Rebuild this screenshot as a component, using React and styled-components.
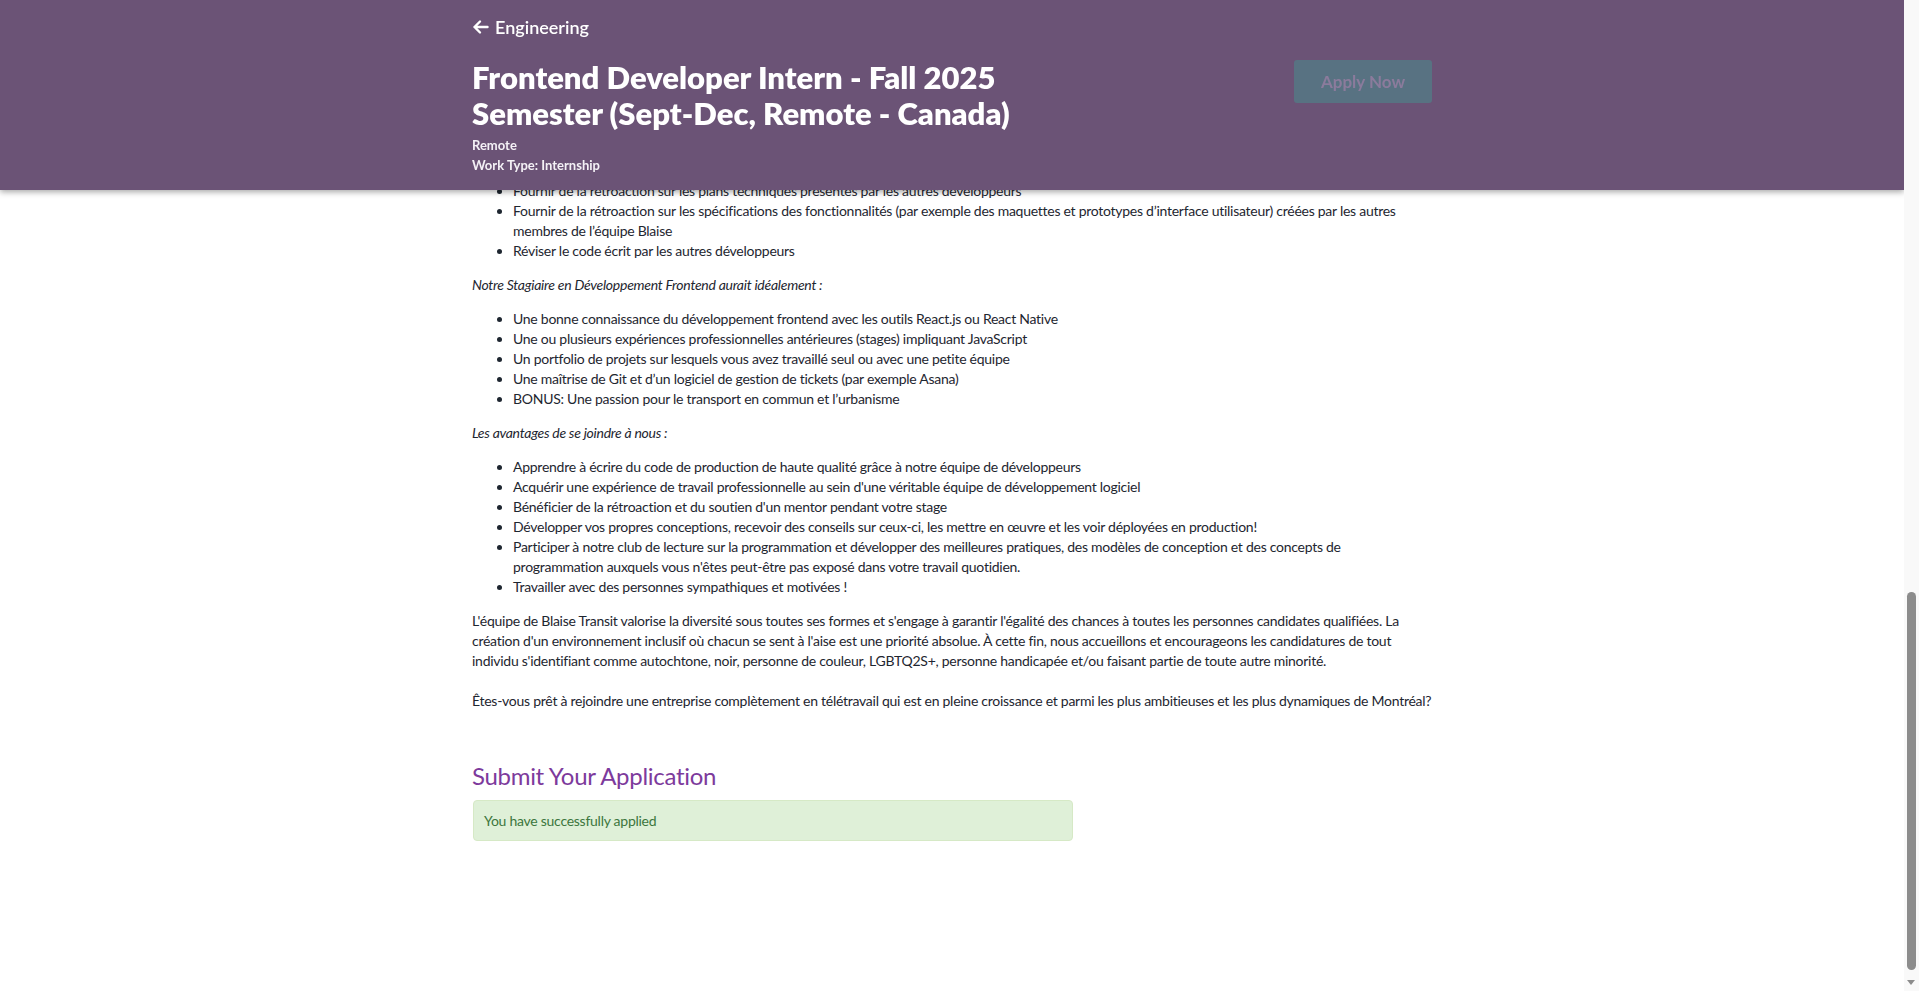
import React from "react";
import styled, { createGlobalStyle } from "styled-components";

const Global = createGlobalStyle`
  body {
    margin: 0;
    padding-right: 15px;
    background: #ffffff;
    font-family: Lato, "Liberation Sans", sans-serif;
    color: #1e2630;
  }
  * { box-sizing: border-box; }
`;

const Header = styled.header`
  position: fixed;
  top: 0;
  left: 0;
  right: 15px;
  height: 190px;
  background: #6b5376;
  color: #ffffff;
  box-shadow: 0 2px 6px rgba(0, 0, 0, 0.35);
  z-index: 10;
`;

const Container = styled.div`
  width: 960px;
  margin: 0 auto;
`;

const HeaderInner = styled(Container)`
  display: flex;
  justify-content: space-between;
  align-items: flex-start;
  padding-top: 15px;
`;

const HeaderMain = styled.div`
  display: flex;
  flex-direction: column;
`;

const BackLink = styled.a`
  display: flex;
  align-items: center;
  gap: 6px;
  font-size: 18px;
  line-height: 24px;
  font-weight: 600;
  color: #ffffff;
  text-decoration: none;
`;

const Title = styled.h1`
  margin: 20px 0 4px;
  max-width: 600px;
  font-size: 31px;
  line-height: 36px;
  font-weight: 800;
  letter-spacing: 0;
`;

const Meta = styled.div`
  font-size: 13px;
  line-height: 20px;
  font-weight: 700;
  color: #f4f1f6;
`;

const ApplyButton = styled.button`
  margin-top: 45px;
  width: 138px;
  height: 43px;
  border: none;
  border-radius: 3px;
  background: #587282;
  color: #8b7b9c;
  font-family: inherit;
  font-size: 17px;
  font-weight: 700;
  cursor: not-allowed;
`;

const Main = styled(Container)`
  padding-top: 181px;
  padding-bottom: 151px;
  font-size: 14px;
  line-height: 20px;
  letter-spacing: -0.265px;
`;

const List = styled.ul`
  margin: 14px 0;
  padding-left: 41px;
  &:first-child { margin-top: 0; }
`;

const Item = styled.li``;

const Lead = styled.p`
  margin: 14px 0;
  font-style: italic;
`;

const Para = styled.p`
  margin: 14px 0 0;
`;

const SectionTitle = styled.h2`
  margin: 52px 0 11px;
  font-size: 24px;
  line-height: 26px;
  font-weight: 400;
  letter-spacing: -0.3px;
  color: #7d3a9c;
`;

const SuccessBox = styled.div`
  width: 600px;
  margin-left: 1px;
  padding: 10px;
  background: #dff0d8;
  border: 1px solid #d6e9c6;
  border-radius: 4px;
  color: #3c763d;
  font-size: 14px;
  line-height: 19px;
`;

const ScrollTrack = styled.div`
  position: fixed;
  top: 0;
  right: 0;
  bottom: 0;
  width: 15px;
  background: #f9f9f9;
  z-index: 20;
`;

const ScrollThumb = styled.div`
  position: absolute;
  top: 592px;
  left: 3px;
  width: 9px;
  height: 378px;
  border-radius: 5px;
  background: #8c8c8c;
`;

const ScrollArrow = styled.div`
  position: absolute;
  bottom: 6px;
  left: 3px;
  width: 0;
  height: 0;
  border-left: 4.5px solid transparent;
  border-right: 4.5px solid transparent;
  border-top: 5px solid #8c8c8c;
`;

const Arrow = () => (
  <svg width="17" height="16" viewBox="0 0 17 16" aria-hidden="true">
    <path d="M15.5 8H2.5M8 2.5L2.5 8L8 13.5" fill="none" stroke="#fff" strokeWidth="2.4" strokeLinecap="round" strokeLinejoin="round" />
  </svg>
);

export default function App() {
  return (
    <>
      <Global />
      <Header>
        <HeaderInner>
          <HeaderMain>
            <BackLink href="#">
              <Arrow />
              Engineering
            </BackLink>
            <Title>Frontend Developer Intern - Fall 2025 Semester (Sept-Dec, Remote - Canada)</Title>
            <Meta>Remote</Meta>
            <Meta>Work Type: Internship</Meta>
          </HeaderMain>
          <ApplyButton disabled>Apply Now</ApplyButton>
        </HeaderInner>
      </Header>
      <Main>
        <List>
          <Item>Fournir de la rétroaction sur les plans techniques présentés par les autres développeurs</Item>
          <Item>Fournir de la rétroaction sur les spécifications des fonctionnalités (par exemple des maquettes et prototypes d’interface utilisateur) créées par les autres membres de l’équipe Blaise</Item>
          <Item>Réviser le code écrit par les autres développeurs</Item>
        </List>
        <Lead>Notre Stagiaire en Développement Frontend aurait idéalement :</Lead>
        <List>
          <Item>Une bonne connaissance du développement frontend avec les outils React.js ou React Native</Item>
          <Item>Une ou plusieurs expériences professionnelles antérieures (stages) impliquant JavaScript</Item>
          <Item>Un portfolio de projets sur lesquels vous avez travaillé seul ou avec une petite équipe</Item>
          <Item>Une maîtrise de Git et d’un logiciel de gestion de tickets (par exemple Asana)</Item>
          <Item>BONUS: Une passion pour le transport en commun et l’urbanisme</Item>
        </List>
        <Lead>Les avantages de se joindre à nous :</Lead>
        <List>
          <Item>Apprendre à écrire du code de production de haute qualité grâce à notre équipe de développeurs</Item>
          <Item>Acquérir une expérience de travail professionnelle au sein d'une véritable équipe de développement logiciel</Item>
          <Item>Bénéficier de la rétroaction et du soutien d'un mentor pendant votre stage</Item>
          <Item>Développer vos propres conceptions, recevoir des conseils sur ceux-ci, les mettre en œuvre et les voir déployées en production!</Item>
          <Item>Participer à notre club de lecture sur la programmation et développer des meilleures pratiques, des modèles de conception et des concepts de programmation auxquels vous n'êtes peut-être pas exposé dans votre travail quotidien.</Item>
          <Item>Travailler avec des personnes sympathiques et motivées !</Item>
        </List>
        <Para>
          L'équipe de Blaise Transit valorise la diversité sous toutes ses formes et s'engage à garantir l'égalité des chances à toutes les personnes candidates qualifiées. La création d'un environnement inclusif où chacun se sent à l'aise est une priorité absolue. À cette fin, nous accueillons et encourageons les candidatures de tout individu s'identifiant comme autochtone, noir, personne de couleur, LGBTQ2S+, personne handicapée et/ou faisant partie de toute autre minorité.
          <br />
          <br />
          Êtes-vous prêt à rejoindre une entreprise complètement en télétravail qui est en pleine croissance et parmi les plus ambitieuses et les plus dynamiques de Montréal?
        </Para>
        <SectionTitle>Submit Your Application</SectionTitle>
        <SuccessBox>You have successfully applied</SuccessBox>
      </Main>
      <ScrollTrack aria-hidden="true">
        <ScrollThumb />
        <ScrollArrow />
      </ScrollTrack>
    </>
  );
}
